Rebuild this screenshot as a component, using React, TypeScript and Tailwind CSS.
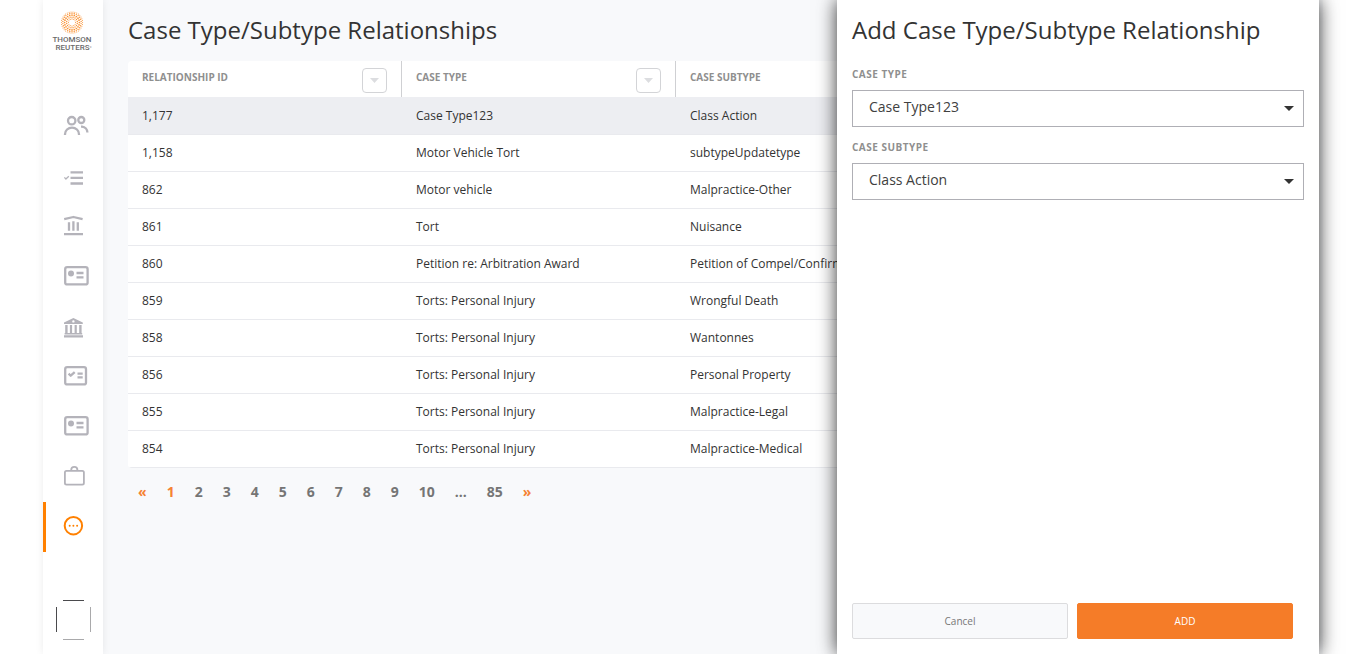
import React from 'react';

const rows: [string, string, string][] = [
  ['1,177', 'Case Type123', 'Class Action'],
  ['1,158', 'Motor Vehicle Tort', 'subtypeUpdatetype'],
  ['862', 'Motor vehicle', 'Malpractice-Other'],
  ['861', 'Tort', 'Nuisance'],
  ['860', 'Petition re: Arbitration Award', 'Petition of Compel/Confirm'],
  ['859', 'Torts: Personal Injury', 'Wrongful Death'],
  ['858', 'Torts: Personal Injury', 'Wantonnes'],
  ['856', 'Torts: Personal Injury', 'Personal Property'],
  ['855', 'Torts: Personal Injury', 'Malpractice-Legal'],
  ['854', 'Torts: Personal Injury', 'Malpractice-Medical'],
];

const pages = ['«', '1', '2', '3', '4', '5', '6', '7', '8', '9', '10', '...', '85', '»'];

const IdCard = () => (
  <>
    <rect x="22.2" y="15.2" width="22.4" height="17.2" rx="2" />
    <circle cx="28" cy="21.5" r="3" fill="currentColor" stroke="none" />
    <path d="M33.5 21h7M33.5 25.3h7" />
  </>
);

const navItems: { label: string; icon: React.ReactNode }[] = [
  {
    label: 'People',
    icon: (
      <>
        <circle cx="28.7" cy="18.7" r="3.7" />
        <circle cx="38.3" cy="18" r="3" />
        <path d="M22 33v-.8a7 6.6 0 0 1 14 0v.8M38 24.6h1a6 6 0 0 1 5.4 6" />
      </>
    ),
  },
  {
    label: 'Tasks',
    icon: (
      <>
        <path d="M27.5 20.3H40M27.5 25.9H40M27.5 31.5H40" />
        <path strokeWidth="1.3" d="m21.4 25.4 1.5 1.6 2.9-2.8" />
      </>
    ),
  },
  {
    label: 'Courts',
    icon: (
      <path d="M21.2 17.2 30.4 15l9.2 2.2M26 20.3v8.5M30.4 19.3v9.5M34.8 20.3v8.5M21 32.2h19" />
    ),
  },
  { label: 'Contacts', icon: <IdCard /> },
  {
    label: 'Institutions',
    icon: (
      <g fill="currentColor" stroke="none">
        <path
          fillRule="evenodd"
          d="M30.4 16 39.8 20.6v1.4H21v-1.4zM30.4 18.2a1.2 1.2 0 1 0 0 2.4 1.2 1.2 0 0 0 0-2.4z"
        />
        <path d="M22.2 23h2.4v8.2h-2.4zM26.9 23h2.2v8.2h-2.2zM31.6 23h2.2v8.2h-2.2zM36.2 23h2.4v8.2h-2.4zM21.6 31h17.6v1.4H21.6zM21 33.2h19v2.2H21z" />
      </g>
    ),
  },
  {
    label: 'Checklist',
    icon: (
      <>
        <rect x="22.2" y="15.2" width="20.8" height="17.2" rx="2" />
        <path d="m25.6 21.6 2.1 2.1 4-3.6M34.5 21.7h5.2M34.5 25.4h5.2" />
      </>
    ),
  },
  { label: 'Profiles', icon: <IdCard /> },
  {
    label: 'Cases',
    icon: (
      <>
        <rect x="21.9" y="18.8" width="19" height="13.8" rx="1.6" strokeWidth="1.8" />
        <path strokeWidth="1.8" d="M28.2 18.6v-.6a3.1 3.1 0 0 1 6.2 0v.6" />
      </>
    ),
  },
  {
    label: 'More',
    icon: (
      <>
        <circle cx="30.4" cy="23.7" r="8.7" strokeWidth="2" />
        <g fill="currentColor" stroke="none">
          <circle cx="26.7" cy="23.7" r="1" />
          <circle cx="30.4" cy="23.7" r="1" />
          <circle cx="34.1" cy="23.7" r="1" />
        </g>
      </>
    ),
  },
];

const logoRings = [
  { r: 3.6, n: 12, s: 0.55 },
  { r: 5.4, n: 16, s: 0.7 },
  { r: 7.4, n: 20, s: 0.85 },
  { r: 9.2, n: 26, s: 0.7 },
  { r: 10.6, n: 34, s: 0.5 },
];

function Logo() {
  return (
    <div className="flex flex-col items-center pt-[11px] pr-[2px]">
      <svg width="24" height="23" viewBox="-12 -11.5 24 23" className="text-[#f99335]">
        {logoRings.map((ring, k) =>
          Array.from({ length: ring.n }, (_, i) => {
            const a = ((i + (k % 2) / 2) / ring.n) * Math.PI * 2;
            return (
              <circle
                key={`${k}-${i}`}
                cx={ring.r * Math.cos(a)}
                cy={ring.r * Math.sin(a)}
                r={ring.s}
                fill="currentColor"
              />
            );
          }),
        )}
      </svg>
      <div className="mt-[2px] text-right font-['Roboto',sans-serif] text-[8px] leading-[8px] font-medium text-[#6a6a6a]">
        THOMSON
        <br />
        REUTERS<span className="text-[5px]">°</span>
      </div>
    </div>
  );
}

function Sidebar() {
  return (
    <aside className="relative z-10 flex w-[60px] shrink-0 flex-col bg-white shadow-[0_0_8px_rgba(0,0,0,0.08)]">
      <div className="h-[102px]">
        <Logo />
      </div>
      <nav>
        {navItems.map((item) => {
          const active = item.label === 'More';
          return (
            <a
              key={item.label}
              href="#"
              aria-label={item.label}
              className={
                active
                  ? 'block h-[50px] text-[#ff8000] shadow-[inset_3px_0_0_#ff8000]'
                  : 'block h-[50px] text-[#b4b3ba]'
              }
            >
              <svg
                width="60"
                height="50"
                viewBox="0 0 60 50"
                fill="none"
                stroke="currentColor"
                strokeWidth="2.3"
                strokeLinejoin="round"
              >
                {item.icon}
              </svg>
            </a>
          );
        })}
      </nav>
      <svg
        width="36"
        height="40"
        viewBox="0 0 36 40"
        fill="none"
        className="mt-auto mb-[14px] ml-[13px]"
      >
        <path stroke="#4a4a4d" d="M7 .5h21M.5 7v25" />
        <path stroke="#a9a9ab" d="M7 39.5h21M34.5 7v25" />
      </svg>
    </aside>
  );
}

function HeaderCell({ label, last }: { label: string; last?: boolean }) {
  return (
    <th
      className={
        last
          ? 'h-9 p-0 px-[14px] text-left'
          : 'h-9 border-r border-[#cfd0d3] p-0 px-[14px] text-left'
      }
    >
      <div className="flex items-center justify-between">
        <span className="pb-1 text-[10px] leading-4 font-bold text-[#8f8f8f]">{label}</span>
        <button
          type="button"
          aria-label={`Filter ${label}`}
          className="mt-[3px] flex size-[25px] items-center justify-center rounded border border-[#d3d4d7] bg-white"
        >
          <svg width="9" height="5" viewBox="0 0 9 5" fill="#dcdde0">
            <path d="M0 0h9L4.5 5z" />
          </svg>
        </button>
      </div>
    </th>
  );
}

function SelectField({ id, label, value }: { id: string; label: string; value: string }) {
  return (
    <div className="flex flex-col">
      <label htmlFor={id} className="mb-2 text-[10px] leading-4 font-bold tracking-wider text-[#8f8f8f]">
        {label}
      </label>
      <div className="grid items-center">
        <select
          id={id}
          defaultValue={value}
          className="col-start-1 row-start-1 h-[37px] w-full appearance-none border border-[#afafb5] bg-white pr-9 pb-[5px] pl-4 text-[14px] text-[#404040]"
        >
          <option>{value}</option>
        </select>
        <svg
          width="10"
          height="5"
          viewBox="0 0 10 5"
          fill="#333"
          className="pointer-events-none col-start-1 row-start-1 mr-[10px] justify-self-end"
        >
          <path d="M0 0h10L5 5z" />
        </svg>
      </div>
    </div>
  );
}

export default function App() {
  return (
    <div className="h-screen overflow-hidden bg-white px-[43px] font-['Open_Sans',sans-serif] text-[#333]">
      <div className="relative flex h-full">
        <Sidebar />
        <main className="min-w-0 flex-1 bg-[#f8f9fb] pr-5 pl-[25px]">
          <h1 className="pt-[14px] font-['Open_Sans',sans-serif] text-[24px] leading-8">
            Case Type/Subtype Relationships
          </h1>
          <table className="mt-[15px] w-full table-fixed border-separate border-spacing-0 overflow-hidden rounded bg-white">
            <colgroup>
              <col className="w-[274px]" />
              <col className="w-[274px]" />
              <col />
            </colgroup>
            <thead>
              <tr>
                <HeaderCell label="RELATIONSHIP ID" />
                <HeaderCell label="CASE TYPE" />
                <HeaderCell label="CASE SUBTYPE" last />
              </tr>
            </thead>
            <tbody>
              {rows.map((row, i) => (
                <tr key={row[0]} className={i === 0 ? 'h-[38px] bg-[#edeef2]' : 'h-[37px] bg-white'}>
                  {row.map((cell) => (
                    <td
                      key={cell}
                      className="border-b border-[#e9eaee] p-0 px-[14px] text-[12px] leading-4 whitespace-nowrap"
                    >
                      {cell}
                    </td>
                  ))}
                </tr>
              ))}
            </tbody>
          </table>
          <nav aria-label="Pagination" className="mt-[14px] flex text-[14px] leading-5 font-bold">
            {pages.map((p) => (
              <a
                key={p}
                href="#"
                className={
                  p === '«' || p === '»' || p === '1'
                    ? 'px-[10px] text-[#f58233]'
                    : 'px-[10px] text-[#757575]'
                }
              >
                {p}
              </a>
            ))}
          </nav>
        </main>
        <section
          aria-labelledby="panel-title"
          className="absolute inset-y-0 right-1 z-20 flex w-[482px] flex-col bg-white px-[15px] shadow-[0_0_18px_rgba(0,0,0,0.8)]"
        >
          <h2
            id="panel-title"
            className="pt-[14px] font-['Open_Sans',sans-serif] text-[24px] leading-8 whitespace-nowrap"
          >
            Add Case Type/Subtype Relationship
          </h2>
          <form className="mt-5 flex flex-1 flex-col gap-3">
            <SelectField id="case-type" label="CASE TYPE" value="Case Type123" />
            <SelectField id="case-subtype" label="CASE SUBTYPE" value="Class Action" />
            <div className="mt-auto mr-[11px] mb-[15px] flex gap-[9px] text-[10px]">
              <button
                type="button"
                className="h-9 flex-1 rounded-xs border border-[#dcdcde] bg-[#f8f9fb] text-[#777]"
              >
                Cancel
              </button>
              <button
                type="submit"
                className="h-9 flex-1 rounded-xs border border-[#f57c28] bg-[#f57c28] text-white"
              >
                ADD
              </button>
            </div>
          </form>
        </section>
      </div>
    </div>
  );
}
